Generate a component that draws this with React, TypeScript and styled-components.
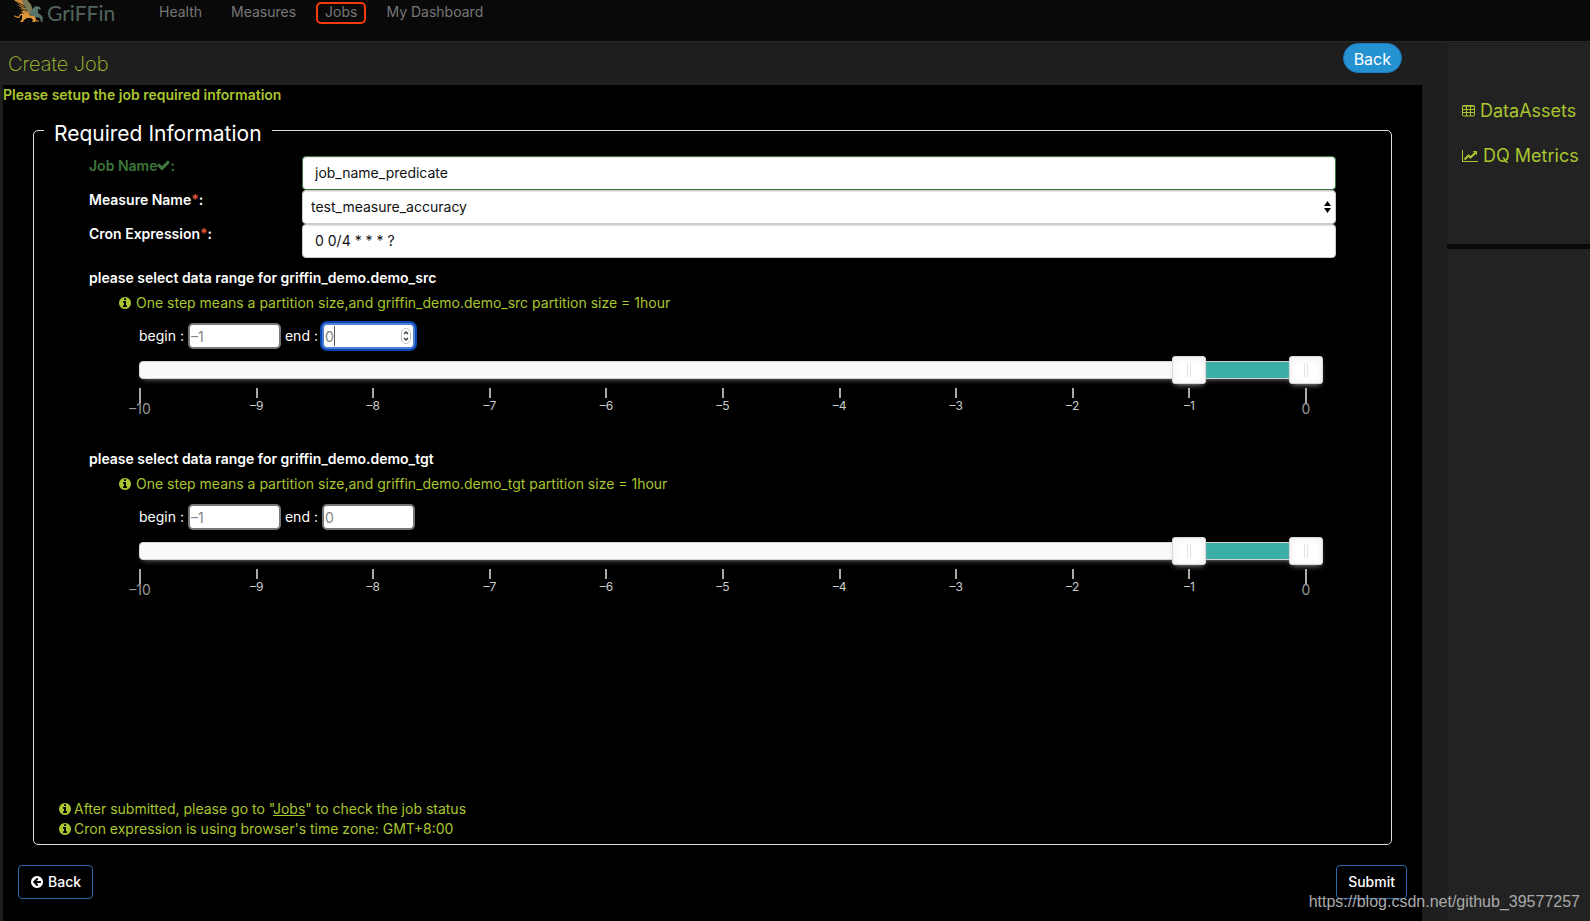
import React, { useState } from "react";
import styled, { createGlobalStyle, css } from "styled-components";

const lime = "#a9c52f";
const blueBorder = "#2a6aa8";

const GlobalStyle = createGlobalStyle`
  *, *::before, *::after { box-sizing: border-box; }
  body {
    margin: 0;
    background: #1e1e1e;
    color: #fff;
    font: 400 14px/20px Inter, "Noto Sans CJK SC", sans-serif;
  }
  button, input, select { font: inherit; }
`;

const Page = styled.div`
  position: relative;
  display: flex;
  flex-direction: column;
  min-height: 100vh;
`;

const Navbar = styled.nav`
  display: flex;
  align-items: flex-start;
  height: 42px;
  padding-left: 12px;
  background: #090909;
  border-bottom: 1px solid #282828;
`;

const Brand = styled.a`
  display: flex;
  gap: 3px;
  width: 132px;
  height: 26px;
  color: #53655e;
  font: 400 21px/26px Lato, sans-serif;
  text-decoration: none;
`;

const NavLink = styled.a<{ $marked?: boolean }>`
  height: 22px;
  margin: 2px 6px 0;
  padding: 0 7px;
  border: 2px solid ${(p) => (p.$marked ? "#f63a0c" : "transparent")};
  border-radius: 5px;
  color: #777;
  line-height: 16px;
  text-decoration: none;
  &:not(:last-child) { margin-right: 5px; }
`;

const Columns = styled.div`
  display: grid;
  flex: 1;
  grid-template-columns: minmax(0, 1fr) 143px;
`;

const Main = styled.main`
  display: flex;
  flex-direction: column;
  padding: 0 25px 0 3px;
`;

const TitleBar = styled.header`
  display: flex;
  justify-content: space-between;
  align-items: flex-start;
  height: 43px;
  padding: 1px 20px 0 5px;
`;

const Title = styled.h1`
  margin: 0;
  color: ${lime};
  font-size: 20px;
  font-weight: 200;
  line-height: 42px;
`;

const PillButton = styled.button`
  height: 30px;
  padding: 2px 10px 0;
  border: 1px solid #2276ba;
  border-radius: 15px;
  background: #2492d0;
  color: #fff;
  font-size: 16px;
  line-height: 26px;
`;

const Panel = styled.form`
  display: flex;
  flex: 1;
  flex-direction: column;
  padding-bottom: 22px;
  background: #000;
`;

const Intro = styled.p`
  margin: 0 0 9px;
  color: ${lime};
  font-weight: 600;
`;

const Fieldset = styled.fieldset`
  display: flex;
  flex: 1;
  flex-direction: column;
  justify-content: space-between;
  min-width: 0;
  margin: 0 30px;
  padding: 0 10px 5px;
  border: 1px solid #ddd;
  border-radius: 5px;
`;

const Legend = styled.legend`
  padding: 8px 10px 0;
  font-size: 21px;
  line-height: 24px;
`;

const Fields = styled.div`
  padding: 10px 45px 0;
`;

const Row = styled.div`
  display: grid;
  grid-template-columns: 213px minmax(0, 1fr);
`;

const Label = styled.label<{ $valid?: boolean }>`
  color: ${(p) => (p.$valid ? "#3c763d" : "#fff")};
  font-weight: 600;
`;

const Star = styled.span`
  color: #e8573a;
`;

const control = css`
  width: 100%;
  height: 34px;
  border: 1px solid #ccc;
  border-radius: 4px;
  background: #fff;
  color: #111;
  box-shadow: inset 0 1px 1px rgba(0, 0, 0, 0.1);
`;

const TextInput = styled.input<{ $valid?: boolean }>`
  ${control}
  padding: 0 12px 1px;
  border-color: ${(p) => (p.$valid ? "#3c763d" : "#ccc")};
`;

const Stack = styled.div`
  display: inline-grid;
  align-items: center;
  & > * { grid-area: 1 / 1; }
`;

const Select = styled.select`
  ${control}
  padding: 0 8px;
  appearance: none;
`;

const SelectArrows = styled.svg`
  justify-self: end;
  margin-right: 5px;
  pointer-events: none;
`;

const RangeBlock = styled.section`
  margin-top: 10px;
`;

const RangeTitle = styled.h2`
  margin: 0 0 5px;
  font-size: 14px;
  font-weight: 600;
  line-height: 20px;
`;

const Note = styled.p<{ $indent?: boolean }>`
  display: flex;
  align-items: center;
  gap: ${(p) => (p.$indent ? 4 : 2)}px;
  margin: 0;
  padding-left: ${(p) => (p.$indent ? 29 : 14)}px;
  color: ${lime};
`;

const NoteLink = styled.a`
  color: inherit;
`;

const Bounds = styled.div`
  display: flex;
  align-items: center;
  gap: 4px;
  margin: 10px 0 12px 50px;
`;

const NumberInput = styled.input<{ $active?: boolean }>`
  width: 93px;
  height: 26px;
  padding: 0 1px;
  border: 2px solid ${(p) => (p.$active ? "#4d7fd6" : "#777")};
  border-radius: 5px;
  outline: 0;
  background: #fff;
  color: #757575;
  box-shadow: ${(p) => (p.$active ? "0 0 0 2px #0b46b0" : "none")};
  appearance: textfield;
  &::placeholder { color: #858585; opacity: 1; }
`;

const Caret = styled.span`
  width: 1px;
  height: 20px;
  margin-left: 12px;
  background: #555;
`;

const Spinner = styled.svg`
  justify-self: end;
  margin-right: 4px;
  pointer-events: none;
`;

const SliderArea = styled.div`
  margin: 0 30px 0 50px;
`;

const Slider = styled.div`
  position: relative;
  height: 18px;
  border: 1px solid #d3d3d3;
  border-radius: 4px;
  background: #fafafa;
  box-shadow: 0 3px 6px -4px #bbb;
`;

const Connect = styled.div`
  position: absolute;
  inset: 0;
  background: #39afa6;
`;

const Handle = styled.input`
  position: absolute;
  top: -6px;
  left: -18px;
  width: calc(100% + 36px);
  height: 28px;
  margin: 0;
  appearance: none;
  background: transparent;
  pointer-events: none;
  &::-webkit-slider-runnable-track { height: 28px; background: transparent; }
  &::-webkit-slider-thumb {
    width: 34px;
    height: 28px;
    border: 1px solid #d9d9d9;
    border-radius: 3px;
    appearance: none;
    background:
      linear-gradient(#e3e3e3, #e3e3e3) 14px 6px / 1px 14px no-repeat,
      linear-gradient(#e3e3e3, #e3e3e3) 17px 6px / 1px 14px no-repeat,
      #fff;
    box-shadow: inset 0 0 1px #fff, inset 0 1px 7px #ebebeb, 0 3px 6px -3px #bbb;
    pointer-events: auto;
  }
`;

const Scale = styled.div`
  display: flex;
  justify-content: space-between;
  height: 60px;
  padding: 9px 0 0 1px;
`;

const Tick = styled.div<{ $large: boolean }>`
  display: flex;
  flex-direction: column;
  align-items: center;
  width: 0;
  color: ${(p) => (p.$large ? "#999" : "#ccc")};
  font-size: ${(p) => (p.$large ? 14 : 12)}px;
  line-height: 16px;
  white-space: nowrap;
  &::before {
    flex: none;
    width: 2px;
    height: ${(p) => (p.$large ? 15 : 10)}px;
    margin-bottom: ${(p) => (p.$large ? -2 : 0)}px;
    background: #aaa;
    content: "";
  }
`;

const Footer = styled.footer`
  display: flex;
  justify-content: space-between;
  margin-top: 20px;
  padding: 0 15px;
`;

const OutlineButton = styled.button`
  display: flex;
  align-items: center;
  gap: 4px;
  height: 34px;
  padding: 0 11px;
  border: 1px solid ${blueBorder};
  border-radius: 4px;
  background: #000;
  color: #fff;
  font-weight: 500;
`;

const Sidebar = styled.aside`
  margin-top: 1px;
  background: #222;
`;

const SideLinks = styled.div`
  display: flex;
  flex-direction: column;
  gap: 21px;
  height: 206px;
  padding: 56px 0 0 15px;
  border-bottom: 5px solid #090909;
`;

const SideLink = styled.a`
  display: flex;
  align-items: center;
  gap: 5px;
  color: ${lime};
  font-size: 18px;
  line-height: 24px;
  text-decoration: none;
  white-space: nowrap;
`;

const Watermark = styled.div`
  position: absolute;
  right: 10px;
  bottom: 9px;
  color: #aaa;
  font: 16px/20px "Liberation Sans", sans-serif;
`;

const disc =
  "m640 416q0 209-103 385.500t-279.500 279.500-385.500 103-385.500-103-279.500-279.500-103-385.500 103-385.500 279.500-279.500 385.500-103 385.500 103 279.500 279.500 103 385.500z";

const InfoIcon = () => (
  <svg width="14" height="14" viewBox="0 0 1792 1792" fill="currentColor" aria-hidden="true">
    <path d={"M1152 1376v-160q0-14-9-23t-23-9h-96v-512q0-14-9-23t-23-9h-320q-14 0-23 9t-9 23v160q0 14 9 23t23 9h96v320h-96q-14 0-23 9t-9 23v160q0 14 9 23t23 9h448q14 0 23-9t9-23zm-128-896v-160q0-14-9-23t-23-9h-192q-14 0-23 9t-9 23v160q0 14 9 23t23 9h192q14 0 23-9t9-23z" + disc} />
  </svg>
);

const ArrowLeftIcon = () => (
  <svg width="14" height="14" viewBox="0 0 1792 1792" fill="currentColor" aria-hidden="true">
    <path d="M1408 960v-128q0-26-19-45t-45-19h-502l189-189q19-19 19-45t-19-45l-91-91q-18-18-45-18t-45 18l-362 362-91 91q-18 18-18 45t18 45l91 91 362 362q18 18 45 18t45-18l91-91q18-18 18-45t-18-45l-189-189h502q26 0 45-19t19-45zm256-64q0 209-103 385.500t-279.500 279.500-385.500 103-385.500-103-279.500-279.500-103-385.500 103-385.500 279.500-279.500 385.500-103 385.500 103 279.500 279.500 103 385.500z" />
  </svg>
);

const CheckIcon = () => (
  <svg width="13" height="12" viewBox="100 200 1600 1350" fill="currentColor" aria-hidden="true">
    <path d="M1671 566q0 40-28 68l-724 724-136 136q-28 28-68 28t-68-28l-136-136-362-362q-28-28-28-68t28-68l136-136q28-28 68-28t68 28l294 295 656-657q28-28 68-28t68 28l136 136q28 28 28 68z" />
  </svg>
);

const TableIcon = () => (
  <svg width="13" height="12" viewBox="0 0 13 12" fill="none" stroke="currentColor" aria-hidden="true">
    <rect x="0.5" y="0.5" width="12" height="10.500" rx="1" />
    <path d="M0.500 1.200h12M0.500 4.500h12M0.500 7.500h12M4.500 1v10M8.500 1v10" />
  </svg>
);

const ChartIcon = () => (
  <svg width="16" height="14" viewBox="0 0 2048 1792" fill="currentColor" aria-hidden="true">
    <path d="M2048 1536v128h-2048v-1536h128v1408h1920zM1920 288v435q0 21-19.500 29.500t-35.500-7.500l-121-121-633 633q-10 10-23 10t-23-10l-233-233-416 416-192-192 585-585q10-10 23-10t23 10l233 233 464-464-121-121q-16-16-7.500-35.500t29.500-19.500h435q14 0 23 9t9 23z" />
  </svg>
);

const GriffinLogo = () => (
  <svg width="32" height="24" viewBox="0 0 32 24" aria-hidden="true">
    <path d="M2 0h13l4 5 2 7-4 3-5-1-3-3 3 0-5-3 3 0-5-3 3 0z" fill="#c98a3a" />
    <path d="M10 0h5l4 5 2 7-4 2-4-5z" fill="#7b7a58" />
    <path d="M4 2l9 4M6 5l8 3M8 8l7 3" stroke="#090909" strokeWidth="0.700" />
    <path d="M21 8l3-2 4 1 1 3-3-1 0 4 3 2 2 3-1 3 2 0-3 1-1-4-3-1-2 1-5-2 1-4z" fill="#587468" />
    <path d="M10 14l5-1 4 3 3 0 2 3-1 3-3 0 1-2-2-2-4 0-3 2-1 2-3 0 2-3z" fill="#dc9638" />
    <path d="M11 14c-4-1-3 5-6 3-2-1-2-1-3-1M22 17l2 4h3" stroke="#dc9638" strokeWidth="1.200" fill="none" />
  </svg>
);

const steps = [-10, -9, -8, -7, -6, -5, -4, -3, -2, -1, 0];
const dash = (n: number) => (n < 0 ? `–${-n}` : `${n}`);

function DataRange({ source, active }: { source: string; active?: boolean }) {
  const [begin, setBegin] = useState(-1);
  const [end, setEnd] = useState(0);
  return (
    <RangeBlock>
      <RangeTitle>please select data range for {source}</RangeTitle>
      <Note $indent>
        <InfoIcon />
        One step means a partition size,and {source} partition size = 1hour
      </Note>
      <Bounds>
        <label htmlFor={`${source}-begin`}>begin :</label>
        <NumberInput id={`${source}-begin`} type="number" placeholder={dash(begin)} />
        <label htmlFor={`${source}-end`}>end :</label>
        <Stack>
          <NumberInput id={`${source}-end`} type="number" placeholder={dash(end)} $active={active} />
          {active && <Caret />}
          {active && (
            <Spinner width="10" height="16" viewBox="0 0 10 16" fill="none" aria-hidden="true">
              <rect x="0.5" y="0.5" width="9" height="15" rx="4.500" stroke="#c4c4c4" />
              <path d="M3 6l2-2 2 2M3 10l2 2 2-2" stroke="#333" strokeWidth="1.300" />
            </Spinner>
          )}
        </Stack>
      </Bounds>
      <SliderArea>
        <Slider>
          <Connect style={{ left: `${(begin + 10) * 10}%`, right: `${-end * 10}%` }} />
          <Handle type="range" aria-label={`${source} begin`} min={-10} max={0} value={begin}
            onChange={(e) => setBegin(Math.min(+e.target.value, end))} />
          <Handle type="range" aria-label={`${source} end`} min={-10} max={0} value={end}
            onChange={(e) => setEnd(Math.max(+e.target.value, begin))} />
        </Slider>
        <Scale>
          {steps.map((n) => (
            <Tick key={n} $large={n % 10 === 0}>{dash(n)}</Tick>
          ))}
        </Scale>
      </SliderArea>
    </RangeBlock>
  );
}

export default function App() {
  return (
    <Page>
      <GlobalStyle />
      <Navbar>
        <Brand href="#"><GriffinLogo />GriFFin</Brand>
        <NavLink href="#health">Health</NavLink>
        <NavLink href="#measures">Measures</NavLink>
        <NavLink href="#jobs" $marked>Jobs</NavLink>
        <NavLink href="#dashboard">My Dashboard</NavLink>
      </Navbar>
      <Columns>
        <Main>
          <TitleBar>
            <Title>Create Job</Title>
            <PillButton type="button">Back</PillButton>
          </TitleBar>
          <Panel onSubmit={(e) => e.preventDefault()}>
            <Intro>Please setup the job required information</Intro>
            <Fieldset>
              <Legend>Required Information</Legend>
              <Fields>
                <Row>
                  <Label htmlFor="job" $valid>Job Name<CheckIcon />:</Label>
                  <TextInput id="job" defaultValue="job_name_predicate" $valid />
                </Row>
                <Row>
                  <Label htmlFor="measure">Measure Name<Star>*</Star>:</Label>
                  <Stack>
                    <Select id="measure">
                      <option>test_measure_accuracy</option>
                    </Select>
                    <SelectArrows width="7" height="14" viewBox="0 0 7 14" aria-hidden="true">
                      <path d="M0 6l3.500-5 3.500 5zM0 8l3.500 5 3.500-5z" />
                    </SelectArrows>
                  </Stack>
                </Row>
                <Row>
                  <Label htmlFor="cron">Cron Expression<Star>*</Star>:</Label>
                  <TextInput id="cron" defaultValue="0 0/4 * * * ?" />
                </Row>
                <DataRange source="griffin_demo.demo_src" active />
                <DataRange source="griffin_demo.demo_tgt" />
              </Fields>
              <div>
                <Note>
                  <InfoIcon />
                  <span>After submitted, please go to "<NoteLink href="#jobs">Jobs</NoteLink>" to check the job status</span>
                </Note>
                <Note>
                  <InfoIcon />
                  Cron expression is using browser's time zone: GMT+8:00
                </Note>
              </div>
            </Fieldset>
            <Footer>
              <OutlineButton type="button"><ArrowLeftIcon />Back</OutlineButton>
              <OutlineButton type="submit">Submit</OutlineButton>
            </Footer>
          </Panel>
        </Main>
        <Sidebar>
          <SideLinks>
            <SideLink href="#assets"><TableIcon />DataAssets</SideLink>
            <SideLink href="#metrics"><ChartIcon />DQ Metrics</SideLink>
          </SideLinks>
        </Sidebar>
      </Columns>
      <Watermark>https://blog.csdn.net/github_39577257</Watermark>
    </Page>
  );
}
